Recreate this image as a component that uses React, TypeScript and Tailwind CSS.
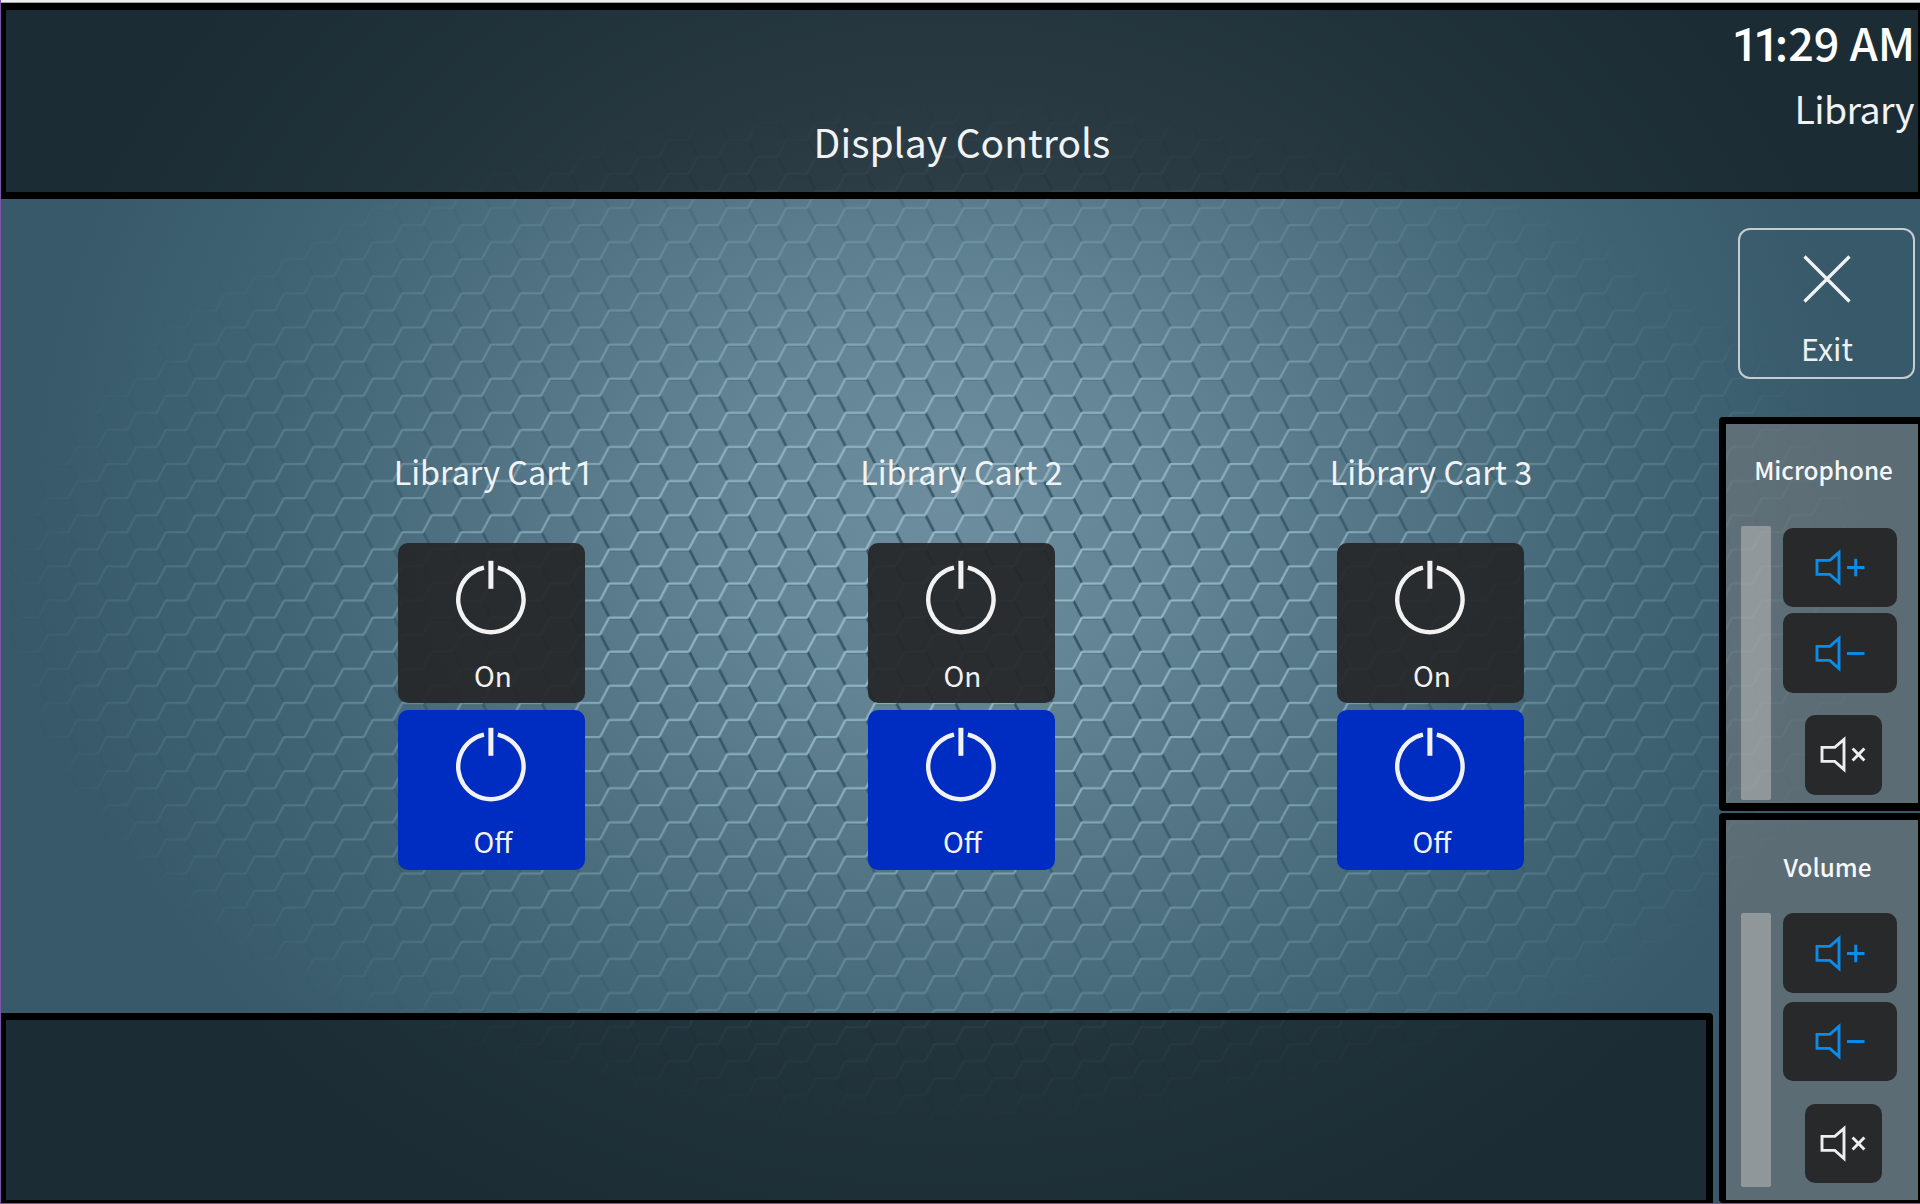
import React from "react";

function Backdrop() {
  return (
    <svg className="absolute inset-0 h-full w-full" viewBox="0 0 1920 1204" preserveAspectRatio="none" aria-hidden="true">
      <defs>
        <radialGradient id="glow" gradientUnits="userSpaceOnUse" cx="0" cy="0" r="1" gradientTransform="translate(950 500) scale(920 800)">
          <stop offset="0" stopColor="#6e8e9e" />
          <stop offset="0.25" stopColor="#628495" />
          <stop offset="0.5" stopColor="#517384" />
          <stop offset="0.75" stopColor="#416475" />
          <stop offset="1" stopColor="#375969" />
        </radialGradient>
        <radialGradient id="fade" gradientUnits="userSpaceOnUse" cx="0" cy="0" r="1" gradientTransform="translate(950 610) scale(950 520)">
          <stop offset="0" stopColor="#fff" />
          <stop offset="0.35" stopColor="#fff" stopOpacity="0.9" />
          <stop offset="0.65" stopColor="#fff" stopOpacity="0.4" />
          <stop offset="0.85" stopColor="#fff" stopOpacity="0.18" />
          <stop offset="1" stopColor="#fff" stopOpacity="0" />
        </radialGradient>
        <pattern id="hex" patternUnits="userSpaceOnUse" x="638.7" y="596.5" width="59.1" height="34.13">
          <g fill="none" strokeLinecap="round">
            <path d="M21.3 4.6 L29.2 19.8 M50.8 -12.6 L58.7 2.8 M50.8 21.6 L58.7 36.9 M-8.3 -12.6 L-.4 2.8 M-8.3 21.6 L-.4 36.9 M21.3 -29.5 L29.2 -14.3" stroke="#294b5b" strokeWidth="2.6" strokeOpacity="0.85" />
            <path d="M0 5.8 H20 M30 22.9 H49.5" stroke="#3f6170" strokeWidth="1.2" strokeOpacity="0.4" />
            <path d="M0 4 H20.5 M29.5 21.07 H50 L59.1 4 M20.5 38.13 L29.5 21.07 M20.5 4 L29.5 -13.06 M-9.1 21.07 L0 4 M50 -13.06 L54.5 -21" stroke="#a2c5d2" strokeWidth="2.2" strokeOpacity="0.8" />
          </g>
        </pattern>
        <mask id="hexMask">
          <rect width="1920" height="1204" fill="url(#fade)" />
        </mask>
      </defs>
      <rect width="1920" height="1204" fill="url(#glow)" />
      <rect width="1920" height="1204" fill="url(#hex)" mask="url(#hexMask)" />
    </svg>
  );
}

function PowerIcon() {
  return (
    <svg className="h-[80px] w-[80px]" viewBox="0 0 80 80" fill="none" stroke="#f2f2f2">
      <path d="M33 9.6 A32.7 32.7 0 1 0 46.8 9.6" strokeWidth="4.4" />
      <path d="M39.9 2.8 V30.8" strokeWidth="5" />
    </svg>
  );
}

function PowerButton({ label, active }: { label: string; active?: boolean }) {
  return (
    <button
      className={`flex h-[160px] w-[187px] flex-col items-center rounded-[10px] text-[28px] leading-8 text-[#f2f2f2] ${
        active ? "bg-[#002dc1]" : "bg-[#26282a]/95"
      }`}
    >
      <span className="mt-[15px] mr-px block h-[80px]">
        <PowerIcon />
      </span>
      <span className="mt-[20.5px] ml-[2px]">{label}</span>
    </button>
  );
}

function Cart({ index }: { index: number }) {
  return (
    <section className="flex w-[187px] flex-col items-center">
      <h2 className="h-[92.5px] text-[32.3px] leading-10 whitespace-nowrap text-[#f0f3f4]">
        Library Cart{" "}
        <span className={index === 1 ? "-mr-[3.5px] -ml-[3px] font-['Roboto',sans-serif] text-[33px] leading-none" : ""}>{index}</span>
      </h2>
      <div className="flex flex-col gap-[6.5px]">
        <PowerButton label="On" />
        <PowerButton label="Off" active />
      </div>
    </section>
  );
}

function SpeakerIcon({ kind }: { kind: "plus" | "minus" | "mute" }) {
  const mark = { plus: "M32 19.5 H49.5 M40.7 10.8 V28.2", minus: "M32 19.5 H49.5", mute: "M32.6 13.5 L44.4 25.5 M44.4 13.5 L32.6 25.5" }[kind];
  return (
    <svg
      className={kind === "mute" ? "mt-[1px] h-[40px] w-[46px] text-[#eeeeee]" : "mt-[1.5px] h-[40px] w-[50px] text-[#0a8ceb]"}
      viewBox={kind === "mute" ? "0 0 46 40" : "0 0 50 40"}
      fill="none"
      stroke="currentColor"
      strokeWidth="2.9"
    >
      <path d="M2 12.4 H14.8 L24 4.4 V34.6 L14.8 26.4 H2 Z" />
      <path d={mark} />
    </svg>
  );
}

function KeyButton({ kind }: { kind: "plus" | "minus" | "mute" }) {
  return (
    <button
      className={`flex h-[79.5px] items-center justify-center rounded-[10px] bg-[#28292b] ${
        kind === "mute" ? "ml-[22px] w-[76.5px]" : "w-[114px]"
      }`}
    >
      <SpeakerIcon kind={kind} />
    </button>
  );
}

function LevelPanel({
  title,
  panel,
  heading,
  body,
  keyGap,
}: {
  title: string;
  panel: string;
  heading: string;
  body: string;
  keyGap: string;
}) {
  return (
    <section className={`flex flex-col rounded-l-[4px] border-black bg-[#808080]/50 bg-clip-padding ${panel}`}>
      <h3 className={`text-center text-[24.3px] leading-8 font-medium text-[#f6f7f8] ${heading}`}>{title}</h3>
      <div className={`ml-[15px] flex gap-3 ${body}`}>
        <div className="h-[273.5px] w-[30px] rounded-[2px] bg-[#c4c2c0]/50" />
        <div className="flex flex-col">
          <div className={`flex flex-col ${keyGap}`}>
            <KeyButton kind="plus" />
            <KeyButton kind="minus" />
          </div>
          <div className="mt-[22.5px] flex">
            <KeyButton kind="mute" />
          </div>
        </div>
      </div>
    </section>
  );
}

export default function App() {
  return (
    <div className="relative h-[1204px] w-[1920px] overflow-hidden bg-[#375969] font-['Noto_Sans_CJK_SC',sans-serif]">
      <Backdrop />
      <div className="relative flex h-full flex-col border-b border-l border-[#7a55a8]">
        <div className="h-[3px] shrink-0 border-b border-[#a5a5a5] bg-[#eeeeee]" />
        <header className="flex h-[196px] shrink-0 border-t-[7px] border-r-2 border-b-[7px] border-l-[5px] border-black bg-black/50 bg-clip-padding">
          <div className="w-[300px]" />
          <h1 className="mt-[107px] flex-1 text-center text-[39px] leading-[48px] text-[#f0f2f3]">Display Controls</h1>
          <div className="flex w-[300px] flex-col items-end pr-[4px]">
            <time className="mt-[4px] -mr-[1px] text-[45px] leading-[56px] font-medium whitespace-nowrap text-white">
              <span className="font-['Roboto',sans-serif] text-[46.4px] leading-none tracking-[-5px]">11</span>:29 AM
            </time>
            <span className="mt-[15.5px] text-[37.5px] leading-[44px] tracking-[-0.6px] text-[#f0f2f3]">Library</span>
          </div>
        </header>

        <div className="flex min-h-0 flex-1">
          <div className="flex w-[1712px] flex-col">
            <main className="flex flex-1 justify-start gap-[282.5px] pt-[251.5px] pl-[397.4px]">
              <Cart index={1} />
              <Cart index={2} />
              <Cart index={3} />
            </main>
            <footer className="h-[190px] rounded-tr-[4px] border-t-[7px] border-r-[7px] border-b-[3px] border-l-[5px] border-black bg-black/50 bg-clip-padding" />
          </div>

          <aside className="ml-[6px] flex w-[201px] flex-col">
            <button className="mt-[29px] ml-[19px] flex h-[151px] w-[177px] shrink-0 flex-col items-center rounded-[12px] border-2 border-[#c3cdd2] text-[30.5px] leading-9 text-[#eef1f3]">
              <svg className="mt-[24px] h-[50px] w-[50px]" viewBox="0 0 50 50" fill="none" stroke="#f0f3f4" strokeWidth="3.2">
                <path d="M2.5 2.5 L47.5 47.5 M47.5 2.5 L2.5 47.5" />
              </svg>
              <span className="mt-[25.5px] ml-[1px]">Exit</span>
            </button>
            <LevelPanel
              title="Microphone"
              panel="mt-[38px] h-[394px] border-t-[7.5px] border-r-2 border-b-[8px] border-l-[7px]"
              heading="mt-[30px] pl-[3px]"
              body="mt-[40px]"
              keyGap="mt-[1.5px] gap-[6px]"
            />
            <LevelPanel
              title="Volume"
              panel="mt-[2px] h-[390px] border-t-[7.5px] border-r-2 border-b-[3px] border-l-[7px]"
              heading="mt-[31px] pl-[11px]"
              body="mt-[30px]"
              keyGap="gap-[9px]"
            />
          </aside>
        </div>
      </div>
    </div>
  );
}
